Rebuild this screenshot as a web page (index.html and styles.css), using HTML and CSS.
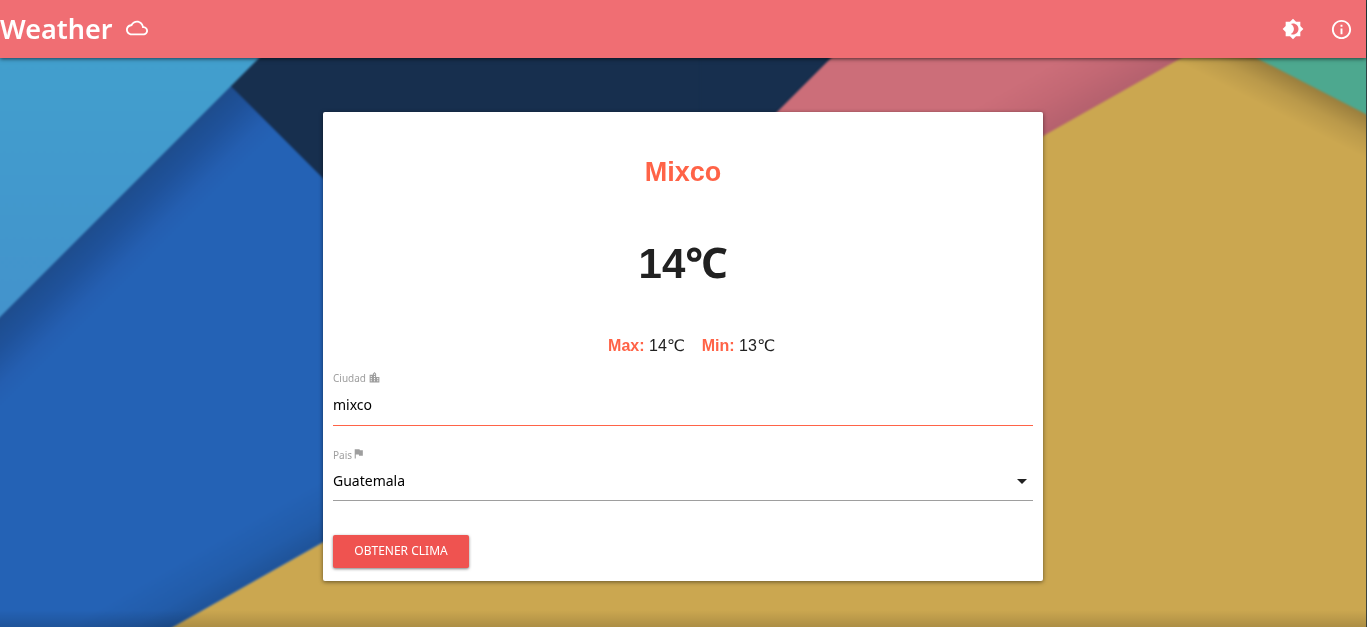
FILE: index.html
```html
<!DOCTYPE html>
<html lang="es">
<head>
<meta charset="utf-8">
<meta name="viewport" content="width=device-width, initial-scale=1">
<title>Weather</title>
<link rel="stylesheet" href="styles.css">
</head>
<body>
<svg class="backdrop" viewBox="0 0 1367 627" preserveAspectRatio="none" aria-hidden="true">
  <defs>
    <linearGradient id="sky" x1="0" y1="0" x2="0" y2="1"><stop offset="0" stop-color="#42a2ce"/><stop offset="1" stop-color="#4392cc"/></linearGradient>
    <linearGradient id="blue" gradientUnits="userSpaceOnUse" x1="129" y1="187" x2="175" y2="233"><stop offset="0" stop-color="#1e4c8c"/><stop offset=".35" stop-color="#1f529b"/><stop offset=".75" stop-color="#245eb0"/><stop offset="1" stop-color="#2462b5"/></linearGradient>
    <linearGradient id="fold" gradientUnits="userSpaceOnUse" x1="248" y1="585" x2="221" y2="538"><stop offset="0" stop-color="#102848" stop-opacity=".26"/><stop offset=".4" stop-color="#102848" stop-opacity=".1"/><stop offset="1" stop-color="#102848" stop-opacity="0"/></linearGradient>
    <linearGradient id="pink" gradientUnits="userSpaceOnUse" x1="1112" y1="96" x2="1084" y2="46"><stop offset="0" stop-color="#b5616e"/><stop offset=".5" stop-color="#c36874"/><stop offset="1" stop-color="#cc6e79"/></linearGradient>
    <linearGradient id="gold" gradientUnits="userSpaceOnUse" x1="1311" y1="86" x2="1293" y2="121"><stop offset="0" stop-color="#9a7e3d"/><stop offset=".5" stop-color="#ba994a"/><stop offset="1" stop-color="#cba750"/></linearGradient>
    <linearGradient id="foot" x1="0" y1="0" x2="0" y2="1"><stop offset="0" stop-color="#000" stop-opacity="0"/><stop offset="1" stop-color="#000" stop-opacity=".15"/></linearGradient>
    <filter id="soft" x="-5%" y="-5%" width="110%" height="110%" color-interpolation-filters="sRGB"><feGaussianBlur stdDeviation="0.8"/></filter>
  </defs>
  <rect width="1367" height="627" fill="#172f4e"/>
  <g filter="url(#soft)">
    <path fill="url(#blue)" d="M145 0 800 655H-20V0z"/>
    <path fill="url(#fold)" d="M-20 736 800 271V120H-20z"/>
    <path fill="#172f4e" d="M145 0 700 555V0z"/>
    <path fill="url(#pink)" d="M889 0H1300L600 385V289z"/>
    <path fill="url(#gold)" d="M1284 0 136 648H1387V0z"/>
    <path fill="#4da88f" d="M1144 0 1387 125V0z"/>
    <path fill="url(#sky)" d="M-20 0H317L-20 337z"/>
  </g>
  <rect y="610" width="1367" height="17" fill="url(#foot)"/>
  <rect x="1366" width="1" height="627" fill="#263238" fill-opacity=".85"/>
</svg>

<div class="page">
<header class="topbar">
  <a class="brand" href="#">Weather
    <svg class="icon cloud" viewBox="0 0 24 24"><path d="M19.35 10.04C18.67 6.59 15.64 4 12 4 9.11 4 6.6 5.64 5.35 8.04 2.34 8.36 0 10.91 0 14c0 3.31 2.69 6 6 6h13c2.76 0 5-2.24 5-5 0-2.64-2.05-4.78-4.65-4.96zM19 18H6c-2.21 0-4-1.79-4-4 0-2.05 1.53-3.76 3.56-3.97l1.07-.11.5-.95C8.08 7.14 9.94 6 12 6c2.62 0 4.88 1.86 5.39 4.43l.3 1.5 1.53.11c1.56.1 2.78 1.41 2.78 2.96 0 1.65-1.35 3-3 3z"/></svg>
  </a>
  <nav class="actions">
    <button type="button" class="action" aria-label="Cambiar tema"><svg class="icon theme" viewBox="0 0 24 24"><path fill-rule="evenodd" d="M20 8.69V4h-4.690L12 .69 8.690 4H4v4.690L.69 12 4 15.310V20h4.690L12 23.310 15.310 20H20v-4.690L23.310 12 20 8.690zM12 18c-.89 0-1.740-.2-2.500-.55C11.560 16.500 13 14.420 13 12s-1.440-4.500-3.500-5.450C10.260 6.200 11.110 6 12 6c3.310 0 6 2.690 6 6s-2.690 6-6 6z"/></svg></button>
    <button type="button" class="action" aria-label="Información"><svg class="icon info" viewBox="0 0 24 24"><path d="M11 17h2v-6h-2v6zm1-15C6.480 2 2 6.480 2 12s4.480 10 10 10 10-4.480 10-10S17.520 2 12 2zm0 18c-4.410 0-8-3.590-8-8s3.590-8 8-8 8 3.590 8 8-3.590 8-8 8zM11 9h2V7h-2v2z"/></svg></button>
  </nav>
</header>

<main class="card">
  <h1 class="city">Mixco</h1>
  <p class="temperature">14℃</p>
  <p class="range"><span><b>Max:</b> 14℃</span><span><b>Min:</b> 13℃</span></p>
  <form class="form">
    <div class="field">
      <label class="label" for="city">Ciudad <svg class="mini" viewBox="0 0 24 24"><path d="M15 11V5l-3-3-3 3v2H3v14h18V11h-6zm-8 8H5v-2h2v2zm0-4H5v-2h2v2zm0-4H5V9h2v2zm6 8h-2v-2h2v2zm0-4h-2v-2h2v2zm0-4h-2V9h2v2zm0-4h-2V5h2v2zm6 12h-2v-2h2v2zm0-4h-2v-2h2v2z"/></svg></label>
      <input class="control focused" id="city" type="text" value="mixco">
    </div>
    <div class="field">
      <label class="label" for="country">Pais<svg class="mini flag" viewBox="0 0 24 24"><path d="M14.400 6 14 4H5v17h2v-7h5.600l.4 2h7V6z"/></svg></label>
      <div class="select">
        <select class="control" id="country"><option>Guatemala</option></select>
        <svg class="icon caret" viewBox="0 0 24 24"><path d="M7 10l5 5 5-5z"/></svg>
      </div>
    </div>
    <button class="submit" type="button">OBTENER CLIMA</button>
  </form>
</main>
</div>
</body>
</html>
```

FILE: styles.css
```css
* { box-sizing: border-box; }
body {
  margin: 0;
  min-height: 100vh;
  font-family: "Noto Sans", sans-serif;
  color: #212121;
}
.backdrop {
  position: fixed;
  inset: 0;
  z-index: -1;
  width: 100%;
  height: 100%;
}
.page { margin-right: 1px; }
.icon { width: 24px; height: 24px; fill: currentColor; }
.topbar {
  display: flex;
  align-items: center;
  justify-content: space-between;
  height: 58px;
  background: #f06e73;
  color: #fff;
  box-shadow: 0 1px 4px rgba(0, 0, 0, .6);
}
.brand {
  display: flex;
  align-items: center;
  gap: 14px;
  padding-bottom: 2px;
  color: #fff;
  font-size: 27px;
  font-weight: 600;
  text-decoration: none;
}
.cloud, .theme { width: 22px; height: 22px; }
.info { width: 23px; height: 23px; }
.actions { display: flex; align-items: center; }
.action {
  display: flex;
  padding: 13px;
  border: 0;
  background: none;
  color: #fff;
}
.card {
  width: calc(100% - 24px);
  max-width: 720px;
  margin: 54px auto 46px;
  padding: 40px 10px 13px;
  border-radius: 2px;
  background: #fff;
  box-shadow: 0 1px 4px rgba(0, 0, 0, .5);
}
.city, .temperature, .range {
  margin: 0;
  text-align: center;
  font-family: "Liberation Sans", "DejaVu Sans", sans-serif;
}
.city { color: #ff6347; font-size: 27px; line-height: 40px; }
.temperature {
  margin-top: 42px;
  font-family: "Liberation Sans", "Noto Sans", sans-serif;
  font-size: 42px;
  font-weight: 700;
  line-height: 60px;
}
.range {
  display: flex;
  justify-content: center;
  gap: 17px;
  margin-top: 40px;
  padding-left: 17px;
  font-size: 16px;
  line-height: 24px;
}
.range b { color: #ff6347; }
.form { padding-top: 11px; }
.field { margin-bottom: 20px; }
.label {
  display: flex;
  align-items: center;
  gap: 2px;
  height: 20px;
  padding-bottom: 2px;
  color: #9e9e9e;
  font-size: 10px;
}
.mini {
  width: 13px;
  height: 13px;
  margin-bottom: 2px;
  fill: currentColor;
}
.flag { margin: 0 0 4px -2px; }
.control {
  display: block;
  appearance: none;
  width: 100%;
  height: 35px;
  padding: 0 0 6px;
  border: 0;
  border-bottom: 1px solid #9e9e9e;
  border-radius: 0;
  outline: 0;
  background: none;
  color: #000;
  font: 14px "Noto Sans", sans-serif;
}
.focused { height: 37px; border-color: #ff6347; }
.select { display: grid; align-items: center; }
.select > * { grid-area: 1 / 1; }
.caret { justify-self: end; margin: 0 -1px 6px 0; pointer-events: none; }
.submit {
  display: block;
  min-width: 136px;
  height: 33px;
  margin-top: 34px;
  padding: 0 20px 2px;
  border: 0;
  border-radius: 2px;
  background: #ef5350;
  color: #fff;
  font: 12px "Noto Sans", sans-serif;
  box-shadow: 0 1px 3px rgba(0, 0, 0, .5);
}
```
